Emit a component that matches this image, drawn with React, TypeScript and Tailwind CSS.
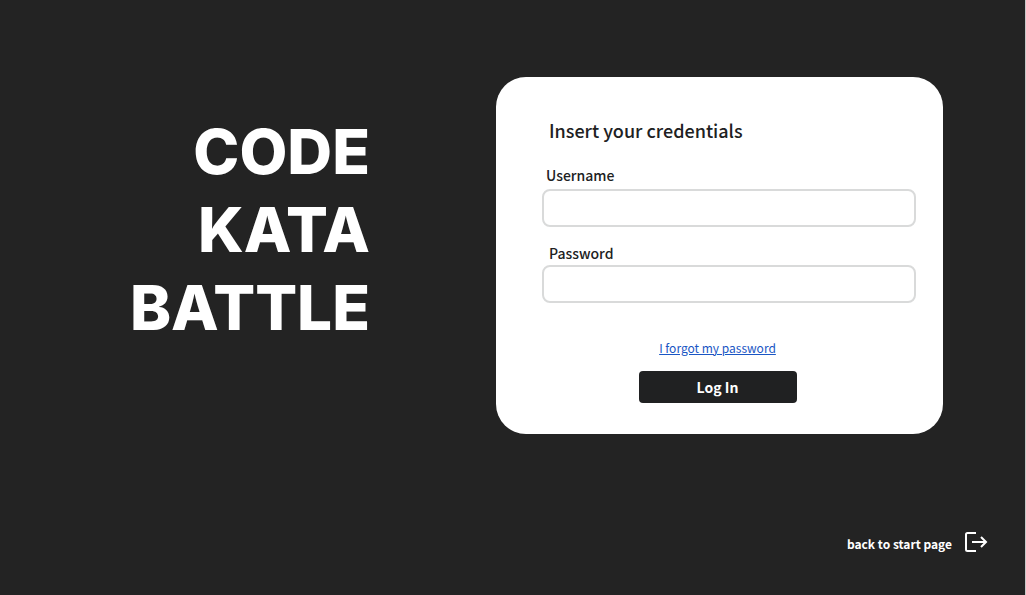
import React from "react";

function Field({ id, label, type, labelClass }: { id: string; label: string; type: string; labelClass: string }) {
  return (
    <div>
      <label htmlFor={id} className={`block text-[14px] leading-5 font-medium ${labelClass}`}>
        {label}
      </label>
      <input
        id={id}
        type={type}
        className="block h-[38px] w-full rounded-lg border-2 border-[#d9dada] bg-white px-3 text-[14px] outline-none focus:border-[#8a8c8c]"
      />
    </div>
  );
}

function ExitIcon() {
  return (
    <svg width="24" height="22" viewBox="0 0 24 22" fill="none" stroke="currentColor" strokeWidth="2" aria-hidden="true">
      <path d="M12 2H3.5Q2 2 2 3.5V18.5Q2 20 3.5 20H12" />
      <path d="M8 11H22M17 6L22 11L17 16" />
    </svg>
  );
}

export default function App() {
  return (
    <div className="flex min-h-screen flex-col border-r border-[#c8c8c8] bg-[#232323] pb-[38px] font-['Noto_Sans_CJK_SC','Noto_Sans',sans-serif] text-[#202122]">
      <main className="flex items-start justify-end pt-[77px] pr-[82px]">
        <h1 className="mr-[126px] pt-9 text-right font-['Inter','Open_Sans',sans-serif] text-[62px] leading-[78px] font-extrabold text-white">
          CODE
          <br />
          KATA
          <br />
          BATTLE
        </h1>
        <form
          className="w-full max-w-[447px] rounded-[30px] bg-white pt-[39px] pr-[27px] pb-[31px] pl-[46px]"
          onSubmit={(e) => e.preventDefault()}
        >
          <h2 className="pl-[7px] text-[18px] leading-7 font-medium">Insert your credentials</h2>
          <div className="mt-[21px] flex flex-col gap-4">
            <Field id="username" label="Username" type="text" labelClass="pl-1 mb-1" />
            <Field id="password" label="Password" type="password" labelClass="pl-[7px] mb-0.5" />
          </div>
          <div className="mt-[35px] flex flex-col items-center pr-[23px]">
            <a href="#forgot" className="text-[12px] leading-5 text-[#1a56c4] underline">
              I forgot my password
            </a>
            <button type="submit" className="mt-[13px] h-8 w-[158px] rounded bg-[#202122] text-[14px] leading-5 font-bold text-white">
              Log In
            </button>
          </div>
        </form>
      </main>
      <footer className="mt-auto flex justify-end pr-[37px]">
        <a href="#start" className="flex items-start gap-3 text-[12px] leading-[26px] font-bold text-white">
          back to start page
          <ExitIcon />
        </a>
      </footer>
    </div>
  );
}
